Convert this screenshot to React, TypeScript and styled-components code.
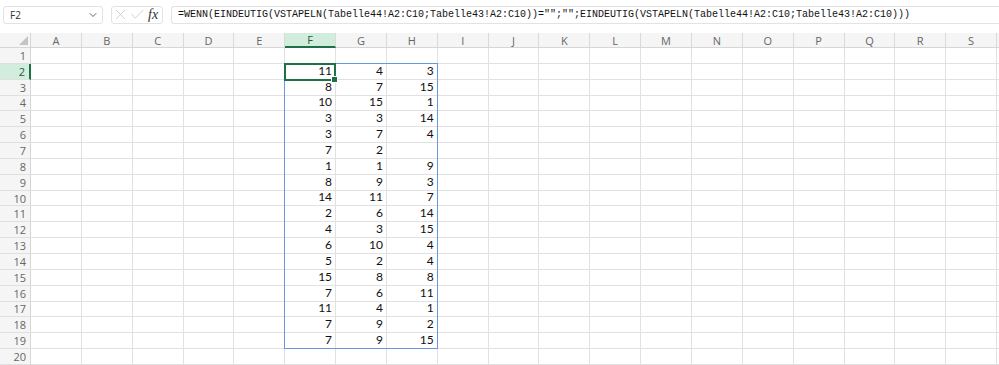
import React from "react";
import styled, { createGlobalStyle } from "styled-components";
import { ChevronDown, X, Check } from "lucide-react";

const GlobalStyle = createGlobalStyle`
  html, body {
    margin: 0;
    padding: 0;
    background: #ffffff;
    overflow: hidden;
  }
  * {
    box-sizing: border-box;
  }
`;

const COLS = ["A", "B", "C", "D", "E", "F", "G", "H", "I", "J", "K", "L", "M", "N", "O", "P", "Q", "R", "S", ""];
const ROW_COUNT = 20;

// values for F..H, starting at row 2
const DATA: (number | null)[][] = [
  [11, 4, 3],
  [8, 7, 15],
  [10, 15, 1],
  [3, 3, 14],
  [3, 7, 4],
  [7, 2, null],
  [1, 1, 9],
  [8, 9, 3],
  [14, 11, 7],
  [2, 6, 14],
  [4, 3, 15],
  [6, 10, 4],
  [5, 2, 4],
  [15, 8, 8],
  [7, 6, 11],
  [11, 4, 1],
  [7, 9, 2],
  [7, 9, 15],
];

const FORMULA =
  '=WENN(EINDEUTIG(VSTAPELN(Tabelle44!A2:C10;Tabelle43!A2:C10))="";"";EINDEUTIG(VSTAPELN(Tabelle44!A2:C10;Tabelle43!A2:C10)))';

type Pos = { $row: number; $col: number };

const Page = styled.div`
  width: 999px;
  height: 365px;
  overflow: hidden;
  background: #fff;
  font-family: "Open Sans", "Liberation Sans", sans-serif;
`;

const FormulaBar = styled.div`
  display: flex;
  align-items: center;
  height: 25px;
  padding: 4px 0 0 3px;
  gap: 8px;
`;

const NameBox = styled.div`
  width: 100px;
  height: 18px;
  border: 1px solid #e3e3e3;
  border-radius: 3px;
  display: flex;
  align-items: center;
  justify-content: space-between;
  padding: 0 3px 0 6px;
  font-size: 10px;
  color: #333;
`;

const IconBox = styled.div`
  width: 52px;
  height: 18px;
  border: 1px solid #e3e3e3;
  border-radius: 3px;
  display: flex;
  align-items: center;
  padding: 0;
  color: #c2c2c2;
  overflow: hidden;
`;

const IconSlot = styled.span<{ $w: number }>`
  width: ${(p) => p.$w}px;
  display: flex;
  align-items: center;
  justify-content: center;
  flex-shrink: 0;
`;

const Fx = styled.span`
  font-family: "Liberation Serif", serif;
  font-style: italic;
  font-size: 14px;
  color: #333;
  margin-left: 2px;
`;

const FormulaInput = styled.div`
  flex: 1;
  height: 18px;
  border: 1px solid #e3e3e3;
  border-right: none;
  border-radius: 3px 0 0 3px;
  display: flex;
  align-items: center;
  padding-left: 6px;
  font-family: "Liberation Mono", monospace;
  font-size: 10px;
  color: #111;
  white-space: nowrap;
  overflow: hidden;
`;

const Sheet = styled.div`
  margin-top: 8px;
  display: grid;
  grid-template-columns: 31px repeat(19, 50.85px) 40px;
  grid-template-rows: 15px repeat(${ROW_COUNT}, 15.85px);
  font-size: 11px;
`;

const Corner = styled.div`
  grid-row: 1;
  grid-column: 1;
  background: #f5f5f5;
  border-right: 1px solid #d6d6d6;
  border-bottom: 1px solid #d6d6d6;
  position: relative;
  &::after {
    content: "";
    position: absolute;
    right: 2px;
    bottom: 2px;
    border-style: solid;
    border-width: 0 0 9px 9px;
    border-color: transparent transparent #c4c4c4 transparent;
  }
`;

const ColHead = styled.div<{ $active?: boolean; $col: number }>`
  grid-row: 1;
  grid-column: ${(p) => p.$col};
  background: ${(p) => (p.$active ? "#d2ecdd" : "#f5f5f5")};
  border-right: 1px solid #dadada;
  border-bottom: ${(p) => (p.$active ? "2px solid #1e7145" : "1px solid #d6d6d6")};
  color: ${(p) => (p.$active ? "#1e5e3a" : "#666")};
  display: flex;
  align-items: center;
  justify-content: center;
  font-family: "Open Sans", sans-serif;
  font-size: 11px;
  line-height: 1;
`;

const RowHead = styled.div<{ $active?: boolean; $row: number }>`
  grid-row: ${(p) => p.$row};
  grid-column: 1;
  background: ${(p) => (p.$active ? "#d2ecdd" : "#f5f5f5")};
  border-right: ${(p) => (p.$active ? "2px solid #1e7145" : "1px solid #d6d6d6")};
  border-bottom: 1px solid #e0e0e0;
  color: ${(p) => (p.$active ? "#1e5e3a" : "#666")};
  display: flex;
  align-items: center;
  justify-content: flex-end;
  padding-right: 4px;
  font-family: "Open Sans", sans-serif;
  font-size: 11px;
  line-height: 1;
`;

const Cell = styled.div<Pos>`
  grid-row: ${(p) => p.$row};
  grid-column: ${(p) => p.$col};
  border-right: 1px solid #e1e1e1;
  border-bottom: 1px solid #e1e1e1;
  display: flex;
  align-items: flex-end;
  justify-content: flex-end;
  padding: 0 3px 1px 0;
  font-family: "Lato", "Liberation Sans", sans-serif;
  font-size: 12px;
  line-height: 14px;
  color: #111;
`;

const Range = styled.div`
  grid-column: 7 / 10;
  grid-row: 3 / 21;
  margin: -1px 0 0 -1px;
  border: 1px solid #6a98de;
  pointer-events: none;
  z-index: 1;
`;

const ActiveCell = styled.div`
  grid-column: 7 / 8;
  grid-row: 3 / 4;
  margin: -1px 0 -1px -1px;
  border: 2px solid #1e7145;
  position: relative;
  pointer-events: none;
  z-index: 2;
  &::after {
    content: "";
    position: absolute;
    right: -4px;
    bottom: -4px;
    width: 5px;
    height: 5px;
    background: #1e7145;
    border: 1px solid #fff;
  }
`;

function App() {
  const cells: React.ReactNode[] = [];
  cells.push(<Corner key="corner" />);
  COLS.forEach((c, ci) =>
    cells.push(
      <ColHead key={"h" + ci} $col={ci + 2} $active={c === "F"}>
        {c}
      </ColHead>
    )
  );

  for (let r = 1; r <= ROW_COUNT; r++) {
    cells.push(
      <RowHead key={"r" + r} $row={r + 1} $active={r === 2}>
        {r}
      </RowHead>
    );
    COLS.forEach((_c, ci) => {
      let value: number | null = null;
      const dataRow = DATA[r - 2];
      if (dataRow && ci >= 5 && ci <= 7) value = dataRow[ci - 5];
      cells.push(
        <Cell key={r + "-" + ci} $row={r + 1} $col={ci + 2}>
          {value ?? ""}
        </Cell>
      );
    });
  }

  return (
    <Page>
      <GlobalStyle />
      <FormulaBar>
        <NameBox>
          <span>F2</span>
          <ChevronDown size={12} color="#444" strokeWidth={1.6} />
        </NameBox>
        <IconBox>
          <IconSlot $w={17}>
            <X size={21} strokeWidth={1} />
          </IconSlot>
          <IconSlot $w={17}>
            <Check size={19} strokeWidth={1.1} />
          </IconSlot>
          <Fx>fx</Fx>
        </IconBox>
        <FormulaInput>{FORMULA}</FormulaInput>
      </FormulaBar>
      <Sheet>
        {cells}
        <Range />
        <ActiveCell />
      </Sheet>
    </Page>
  );
}

export default App;
